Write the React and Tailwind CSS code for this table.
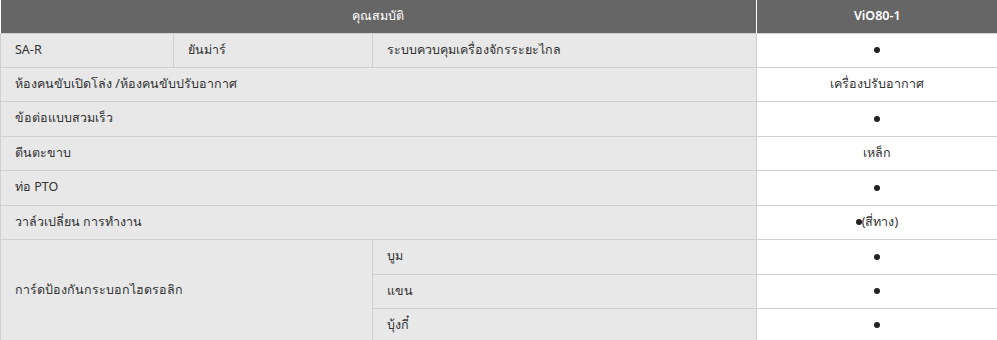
import React from 'react';

const cellL = "border border-[#d0d0d0] bg-[#e8e8e8] px-[14px] text-left align-middle";
const cellR = "border border-[#d0d0d0] bg-white px-[14px] text-center align-middle";

const Dot = () => <span className="inline-block w-[6px] h-[6px] rounded-full bg-[#222] align-middle" />;

const rows = [
  { label: "ห้องคนขับเปิดโล่ง /ห้องคนขับปรับอากาศ", value: "เครื่องปรับอากาศ", h: "h-[34px]" },
  { label: "ข้อต่อแบบสวมเร็ว", value: <Dot />, h: "h-[35px]" },
  { label: "ตีนตะขาบ", value: "เหล็ก", h: "h-[34px]" },
  { label: "ท่อ PTO", value: <Dot />, h: "h-[35px]" },
  { label: "วาล์วเปลี่ยน การทำงาน", value: <><Dot />(สี่ทาง)</>, h: "h-[34px]" },
];

export default function App() {
  return (
    <div className="w-[997px] h-[340px] overflow-hidden bg-white font-['Noto_Sans','DejaVu_Sans',sans-serif] text-[12.5px] text-[#333]">
      <table className="w-[997px] border-collapse table-fixed">
        <colgroup>
          <col className="w-[173px]" />
          <col className="w-[199px]" />
          <col className="w-[384px]" />
          <col className="w-[241px]" />
        </colgroup>
        <thead>
          <tr className="h-[33px]">
            <th colSpan={3} className="bg-[#666666] text-white font-medium text-center border-r border-r-white">คุณสมบัติ</th>
            <th className="bg-[#666666] text-white font-semibold text-center">ViO80-1</th>
          </tr>
        </thead>
        <tbody>
          <tr className="h-[34px]">
            <td className={cellL}>SA-R</td>
            <td className={cellL}>ยันม่าร์</td>
            <td className={cellL}>ระบบควบคุมเครื่องจักรระยะไกล</td>
            <td className={cellR}><Dot /></td>
          </tr>
          {rows.map((r) => (
            <tr key={r.label} className={r.h}>
              <td colSpan={3} className={cellL}>{r.label}</td>
              <td className={cellR}>{r.value}</td>
            </tr>
          ))}
          <tr className="h-[35px]">
            <td colSpan={2} rowSpan={3} className={cellL}>การ์ดป้องกันกระบอกไฮดรอลิก</td>
            <td className={cellL}>บูม</td>
            <td className={cellR}><Dot /></td>
          </tr>
          <tr className="h-[34px]">
            <td className={cellL}>แขน</td>
            <td className={cellR}><Dot /></td>
          </tr>
          <tr className="h-[34px]">
            <td className={cellL}>บุ้งกี๋</td>
            <td className={cellR}><Dot /></td>
          </tr>
        </tbody>
      </table>
    </div>
  );
}
